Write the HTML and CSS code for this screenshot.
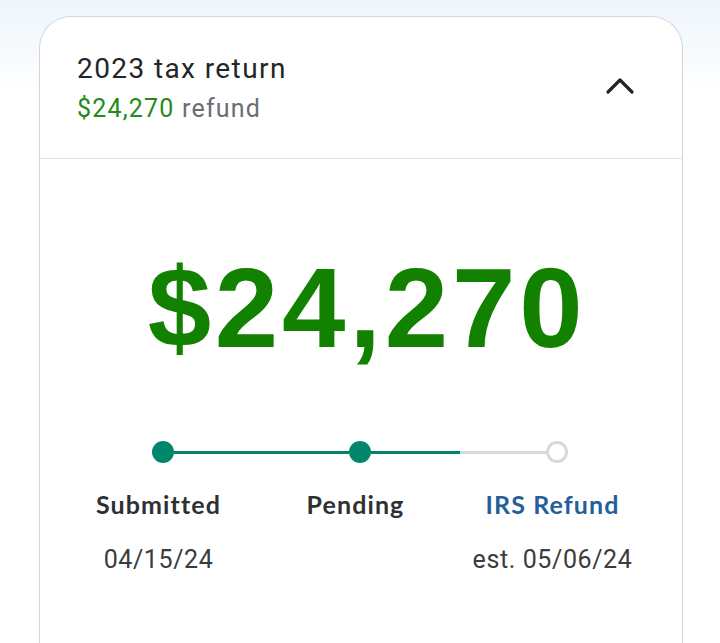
FILE: index.html
```html
<!DOCTYPE html>
<html lang="en">
<head>
<meta charset="utf-8">
<title>2023 tax return</title>
<link rel="stylesheet" href="styles.css">
</head>
<body>
<div class="card">
  <div class="header">
    <div class="header-text">
      <div class="title">2023 tax return</div>
      <div class="subtitle"><span class="sub-amount">$24,270</span> refund</div>
    </div>
    <svg class="chevron" width="30" height="18" viewBox="0 0 30 18" aria-hidden="true">
      <polyline points="3,15 15,3 27,15" fill="none" stroke="#222629" stroke-width="3.2" stroke-linecap="round" stroke-linejoin="round"/>
    </svg>
  </div>
  <div class="body">
    <div class="amount">$24,270</div>
    <div class="track">
      <span class="dot done"></span>
      <span class="seg full"></span>
      <span class="dot done"></span>
      <span class="seg half"></span>
      <span class="dot todo"></span>
    </div>
    <div class="steps">
      <div class="step">
        <div class="label">Submitted</div>
        <div class="date">04/15/24</div>
      </div>
      <div class="step">
        <div class="label">Pending</div>
        <div class="date"></div>
      </div>
      <div class="step">
        <div class="label current">IRS Refund</div>
        <div class="date">est. 05/06/24</div>
      </div>
    </div>
  </div>
</div>
</body>
</html>
```

FILE: styles.css
```css
html, body {
  margin: 0;
  padding: 0;
}
body {
  background: linear-gradient(180deg, #eef6fc 0px, #f6fafd 45px, #ffffff 95px);
  height: 643px;
  overflow: hidden;
  font-family: Roboto, "Liberation Sans", Arial, sans-serif;
}
.card {
  box-sizing: border-box;
  margin: 16px 0 0 39px;
  width: 644px;
  height: 627px;
  background: #ffffff;
  border: 1px solid #d2d6da;
  border-bottom: none;
  border-radius: 32px 32px 0 0;
}
.header {
  display: flex;
  align-items: center;
  justify-content: space-between;
  padding: 35px 47px 34px 37px;
  border-bottom: 1px solid #dfe2e5;
}
.title {
  font-size: 28px;
  line-height: 34px;
  color: #232629;
  letter-spacing: 1.4px;
  margin-bottom: 8px;
}
.subtitle {
  font-size: 25px;
  line-height: 30px;
  color: #6a6e72;
  letter-spacing: 1.2px;
}
.sub-amount {
  color: #258a1b;
}
.chevron {
  display: block;
  margin-top: -4px;
}
.body {
  padding-top: 92px;
}
.amount {
  font-family: "Liberation Sans", Arial, sans-serif;
  font-weight: 700;
  font-size: 114px;
  line-height: 114px;
  color: #138100;
  letter-spacing: 3.8px;
  text-align: center;
  padding-left: 12px;
}
.track {
  display: flex;
  align-items: center;
  width: 416px;
  margin: 76px 0 0 112px;
}
.dot {
  box-sizing: border-box;
  flex: none;
  width: 22px;
  height: 22px;
  border-radius: 50%;
}
.dot.done {
  background: #00876b;
}
.dot.todo {
  background: #ffffff;
  border: 3px solid #d4d9dd;
}
.seg {
  flex: 1;
  height: 3px;
}
.seg.full {
  background: #00876b;
}
.seg.half {
  background: linear-gradient(90deg, #00876b 0, #00876b 51%, #d4d9dd 51%, #d4d9dd 100%);
}
.steps {
  display: grid;
  grid-template-columns: repeat(3, 197px);
  margin: 26px 0 0 20px;
}
.step {
  text-align: center;
}
.label {
  font-family: Lato, "Noto Sans", sans-serif;
  font-weight: 700;
  font-size: 25px;
  line-height: 30px;
  color: #2e3032;
  letter-spacing: 1.1px;
}
.label.current {
  color: #245e9b;
}
.date {
  margin-top: 26px;
  font-size: 25px;
  line-height: 30px;
  height: 30px;
  color: #3a3c3e;
  letter-spacing: 0.6px;
}
```
